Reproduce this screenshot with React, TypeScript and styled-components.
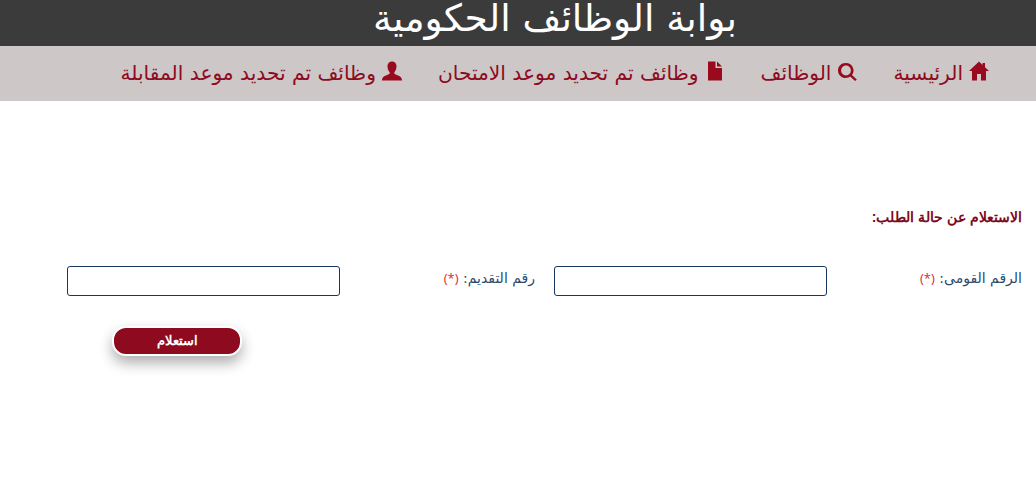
import React from 'react';
import styled, { createGlobalStyle } from 'styled-components';

const GlobalStyle = createGlobalStyle`
html, body {
  margin: 0;
  padding: 0;
  background: #fff;
}
body {
  font-family: "DejaVu Sans", sans-serif;
}
`

const Page = styled.div`
direction: rtl;
width: 1036px;
height: 484px;
overflow: hidden;
`

const Header = styled.header`
height: 46px;
background-color: #3b3b3b;
overflow: hidden;
display: flex;
justify-content: center;
align-items: flex-end;
padding-left: 74px;
`

const Title = styled.h1`
margin: 0;
color: #fff;
font-size: 37.5px;
font-weight: normal;
line-height: 46px;
padding-bottom: 5px;
`

const Nav = styled.nav`
height: 55px;
background-color: #cdc7c7;
display: flex;
align-items: center;
padding-right: 47px;
gap: 36px;
`

const NavLink = styled.a`
display: flex;
align-items: center;
gap: 6px;
color: #8e0b1f;
font-size: 20.2px;
line-height: 28px;
padding-bottom: 2px;
white-space: nowrap;
`

const NavIcon = styled.svg`
width: 20px;
height: 20px;
fill: #990a1e;
flex: none;
margin-bottom: 4px;
`

const Content = styled.main`
padding: 107px 14px 0 0;
`

const SectionTitle = styled.h4`
margin: 0;
color: #7d0a1c;
font-family: "Liberation Sans", sans-serif;
font-size: 14px;
font-weight: bold;
line-height: 18px;
`

const FormRow = styled.div`
display: flex;
align-items: center;
margin-top: 40px;
height: 30px;
`

const Label = styled.label`
width: 195px;
flex: none;
color: #2d4a6b;
font-size: 14px;
margin-bottom: 7px;
`

const Required = styled.span`
color: #d9262e;
font-family: "Open Sans", sans-serif;
font-size: 13px;
`

const Input = styled.input`
box-sizing: border-box;
width: 273px;
height: 30px;
flex: none;
margin-left: 19px;
border: 1px solid #17375e;
border-radius: 3px;
background: #fff;
`

const ButtonRow = styled.div`
display: flex;
justify-content: flex-end;
padding-left: 112px;
margin-top: 30px;
`

const Button = styled.button`
width: 130px;
height: 30px;
border: 2px solid #fff;
border-radius: 14px;
background-color: #8e0b1f;
color: #fff;
font-family: "Liberation Sans", sans-serif;
font-size: 13px;
font-weight: bold;
padding: 0 0 2px;
box-shadow: 0 7px 14px rgba(0, 0, 0, 0.32);
`

const HomeIcon = () => (
  <NavIcon viewBox="0 0 20 20">
    <path d="M10 0.5 L13.5 3.9 V2 H16 V6.3 L20 10 H17 V19.5 H12 V13 H8 V19.5 H3 V10 H0 Z" />
  </NavIcon>
)

const SearchIcon = () => (
  <NavIcon viewBox="0 0 20 20">
    <path fillRule="evenodd" d="M9 2 a7.5 7.5 0 0 1 6 12 l4.8 4.4 -1.7 1.6 -5 -4.6 A7.5 7.5 0 1 1 9 2 Z M9 4.6 a4.9 4.9 0 1 0 0 9.8 a4.9 4.9 0 0 0 0 -9.8 Z" />
  </NavIcon>
)

const FileIcon = () => (
  <NavIcon viewBox="0 0 20 20">
    <path d="M3 0.5 H10.5 V7 H17 V19.5 H3 Z M12 0.5 L17 5.5 H12 Z" />
  </NavIcon>
)

const UserIcon = () => (
  <NavIcon viewBox="0 0 20 20">
    <path d="M10 0.5 C13 0.5 14.5 2.8 14.5 5.5 C14.5 8 13.4 10 12.2 11.5 C12.2 12.8 13 13.3 15 14.1 C17.5 15.1 20 16 20 19.5 H0 C0 16 2.5 15.1 5 14.1 C7 13.3 7.8 12.8 7.8 11.5 C6.6 10 5.5 8 5.5 5.5 C5.5 2.8 7 0.5 10 0.5 Z" />
  </NavIcon>
)

function App() {
  return (
    <Page>
      <GlobalStyle />
      <Header>
        <Title>بوابة الوظائف الحكومية</Title>
      </Header>
      <Nav>
        <NavLink><HomeIcon />الرئيسية</NavLink>
        <NavLink><SearchIcon />الوظائف</NavLink>
        <NavLink><FileIcon />وظائف تم تحديد موعد الامتحان</NavLink>
        <NavLink><UserIcon />وظائف تم تحديد موعد المقابلة</NavLink>
      </Nav>
      <Content>
        <SectionTitle>الاستعلام عن حالة الطلب:</SectionTitle>
        <FormRow>
          <Label>الرقم القومى: <Required>(*)</Required></Label>
          <Input type="text" />
          <Label>رقم التقديم: <Required>(*)</Required></Label>
          <Input type="text" />
        </FormRow>
        <ButtonRow>
          <Button type="button">استعلام</Button>
        </ButtonRow>
      </Content>
    </Page>
  );
}

export default App;
